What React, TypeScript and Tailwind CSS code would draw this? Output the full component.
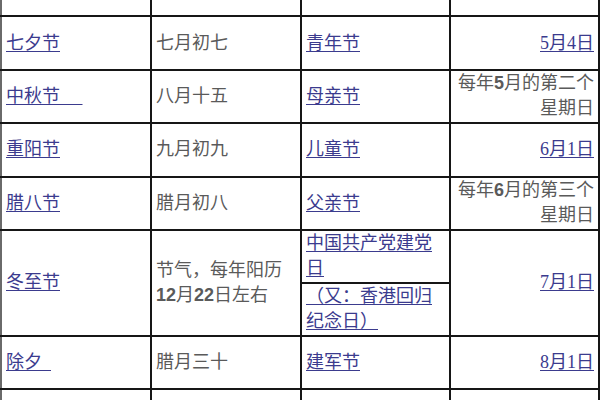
const link = 'text-[#3b3b8e] underline underline-offset-2'
const gray = 'text-[#5a5a5a]'
const cell = 'border-2 border-[#161616] px-[4px] align-middle'

type Row = { name: React.ReactNode; lunar: React.ReactNode; modern: React.ReactNode; date: React.ReactNode }

const Num = ({ children }: { children: React.ReactNode }) => (
  <span className="font-['Liberation_Sans',sans-serif] font-bold">{children}</span>
)

const rows: Row[] = [
  {
    name: <a className={link}>七夕节</a>,
    lunar: <span className={gray}>七月初七</span>,
    modern: <a className={link}>青年节</a>,
    date: <a className={link}>5月4日</a>,
  },
  {
    name: <a className={link}>中秋节&nbsp;&nbsp;&nbsp;&nbsp;&nbsp;</a>,
    lunar: <span className={gray}>八月十五</span>,
    modern: <a className={link}>母亲节</a>,
    date: (
      <span className={gray}>
        每年<Num>5</Num>月的第二个
        <br />
        星期日
      </span>
    ),
  },
  {
    name: <a className={link}>重阳节</a>,
    lunar: <span className={gray}>九月初九</span>,
    modern: <a className={link}>儿童节</a>,
    date: <a className={link}>6月1日</a>,
  },
  {
    name: <a className={link}>腊八节</a>,
    lunar: <span className={gray}>腊月初八</span>,
    modern: <a className={link}>父亲节</a>,
    date: (
      <span className={gray}>
        每年<Num>6</Num>月的第三个
        <br />
        星期日
      </span>
    ),
  },
]

const after: Row[] = [
  {
    name: <a className={link}>除夕&nbsp;&nbsp;</a>,
    lunar: <span className={gray}>腊月三十</span>,
    modern: <a className={link}>建军节</a>,
    date: <a className={link}>8月1日</a>,
  },
  {
    name: <a className={link}>春节</a>,
    lunar: <span className={gray}>正月初一</span>,
    modern: <a className={link}>教师节</a>,
    date: <a className={link}>9月10日</a>,
  },
]

function FestivalRow({ row }: { row: Row }) {
  return (
    <tr className="h-[53.4px]">
      <td className={`${cell} border-l-[#6a6a6a]`}>{row.name}</td>
      <td className={cell}>{row.lunar}</td>
      <td className={cell}>{row.modern}</td>
      <td className={`${cell} text-right`}>{row.date}</td>
    </tr>
  )
}

export default function App() {
  return (
    <div className="w-[600px] h-[400px] overflow-hidden bg-white">
      <table className="-mt-[38px] w-[598px] table-fixed border-collapse text-[18px] leading-[25px] font-['Liberation_Serif','Noto_Sans_CJK_SC',serif]">
        <colgroup>
          <col className="w-[150px]" />
          <col className="w-[150px]" />
          <col className="w-[149px]" />
          <col className="w-[149px]" />
        </colgroup>
        <tbody>
          {/* previous row, only its bottom edge is in view */}
          <tr className="h-[53.4px]">
            <td className={`${cell} border-l-[#6a6a6a] align-bottom pb-[2px]`}>
              <a className={link}>端午节</a>
            </td>
            <td className={`${cell} align-bottom pb-[2px]`}>
              <span className={gray}>五月初五</span>
            </td>
            <td className={`${cell} align-bottom pb-[2px]`}>
              <a className={link}>劳动节</a>
            </td>
            <td className={`${cell} align-bottom pb-[2px] text-right`}>
              <a className={link}>5月1日</a>
            </td>
          </tr>
          {rows.map((row, i) => (
            <FestivalRow key={i} row={row} />
          ))}
          <tr className="h-[53px]">
            <td rowSpan={2} className={`${cell} border-l-[#6a6a6a]`}>
              <a className={link}>冬至节</a>
            </td>
            <td rowSpan={2} className={cell}>
              <span className={gray}>
                节气，每年阳历
                <br />
                <Num>12</Num>月<Num>22</Num>日左右
              </span>
            </td>
            <td className={cell}>
              <a className={link}>
                中国共产党建党
                <br />
                日
              </a>
            </td>
            <td rowSpan={2} className={`${cell} text-right`}>
              <a className={link}>7月1日</a>
            </td>
          </tr>
          <tr className="h-[53px]">
            <td className={cell}>
              <a className={link}>
                （又：香港回归
                <br />
                纪念日）
              </a>
            </td>
          </tr>
          {after.map((row, i) => (
            <FestivalRow key={i} row={row} />
          ))}
        </tbody>
      </table>
    </div>
  )
}
